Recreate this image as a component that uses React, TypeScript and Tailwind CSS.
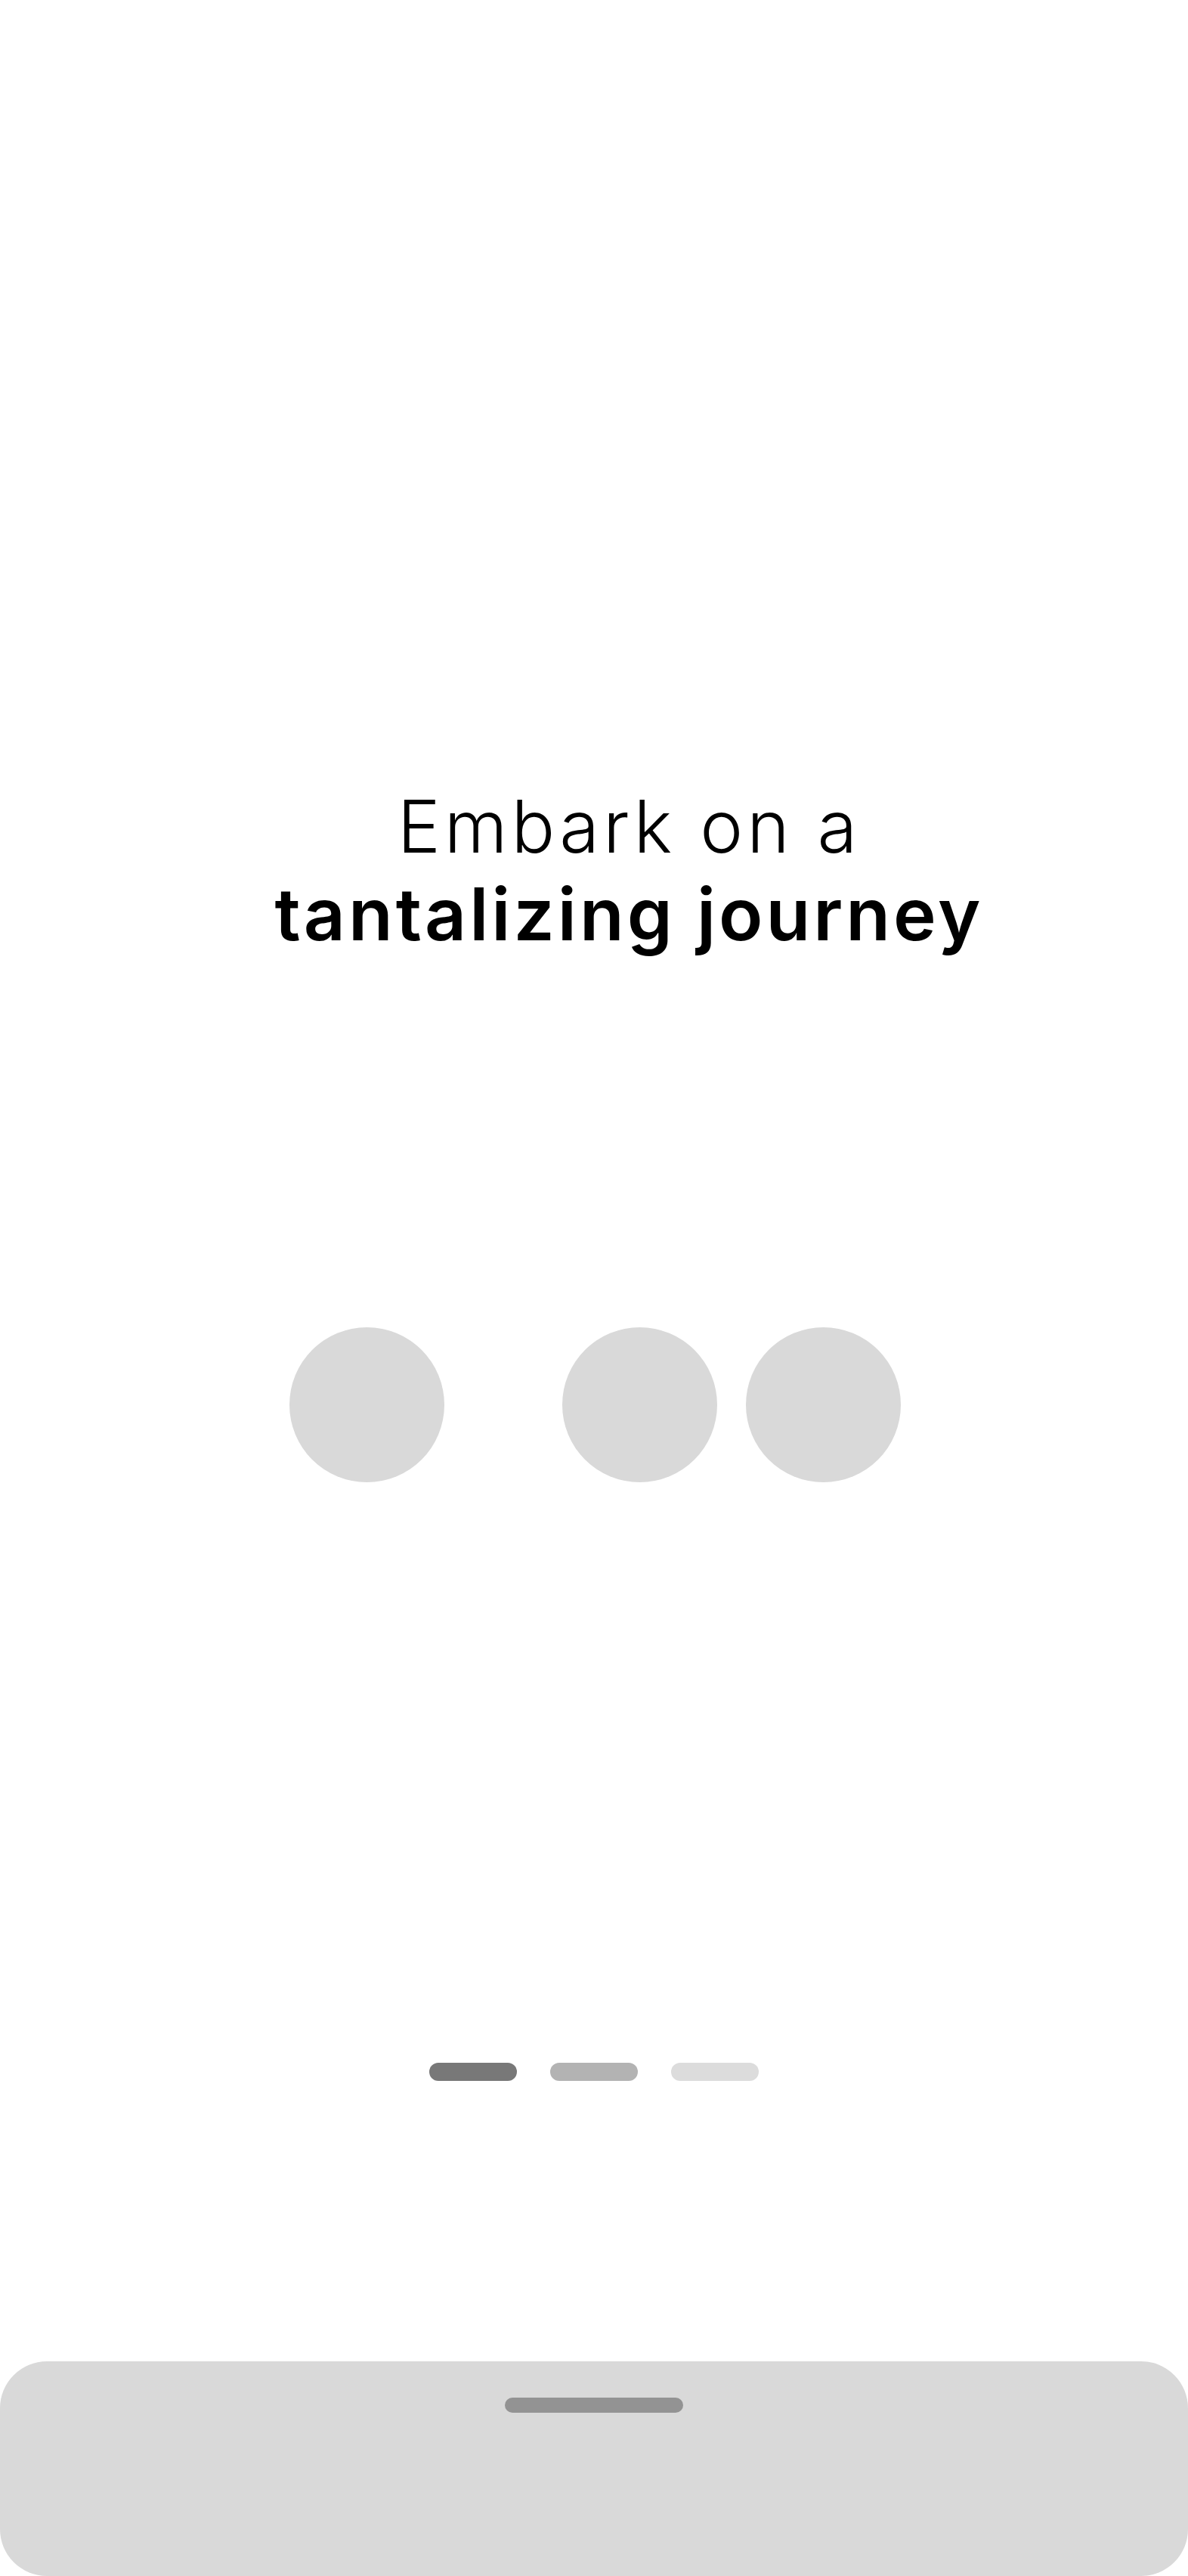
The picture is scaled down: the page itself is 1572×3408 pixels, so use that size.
import React from 'react';

const dots = ['bg-[#787878]', 'bg-[#b3b3b3]', 'bg-[#dcdcdc]'];

export default function App() {
  return (
    <div className="w-[1572px] h-[3408px] flex flex-col bg-white overflow-hidden" style={{ fontFamily: 'Inter, "Noto Sans", sans-serif' }}>
      {/* Onboarding content */}
      <div className="flex-1 flex flex-col items-center pt-[1035px]">
        <h1 className="ml-[93px] text-center text-black text-[96px] leading-[116px]">
          <span className="block font-light tracking-[5px]">Embark on a</span>
          <span className="block font-semibold tracking-[4px]">tantalizing journey</span>
        </h1>

        <div className="mt-[489px] flex items-center pl-[2px]">
          <div className="w-[205px] h-[205px] rounded-full bg-[#d9d9d9]" />
          <div className="ml-[156px] w-[205px] h-[205px] rounded-full bg-[#d9d9d9]" />
          <div className="ml-[38px] w-[205px] h-[205px] rounded-full bg-[#d9d9d9]" />
        </div>

        <div className="mt-[768px] flex items-center gap-[44px]">
          {dots.map((c, i) => (
            <div key={i} className={`w-[116px] h-[24px] rounded-full ${c}`} />
          ))}
        </div>
      </div>

      {/* Bottom sheet */}
      <div className="h-[284px] w-full rounded-[62px] bg-[#d9d9d9] flex justify-center pt-[48px]">
        <div className="w-[236px] h-[20px] rounded-full bg-[#939393]" />
      </div>
    </div>
  );
}
